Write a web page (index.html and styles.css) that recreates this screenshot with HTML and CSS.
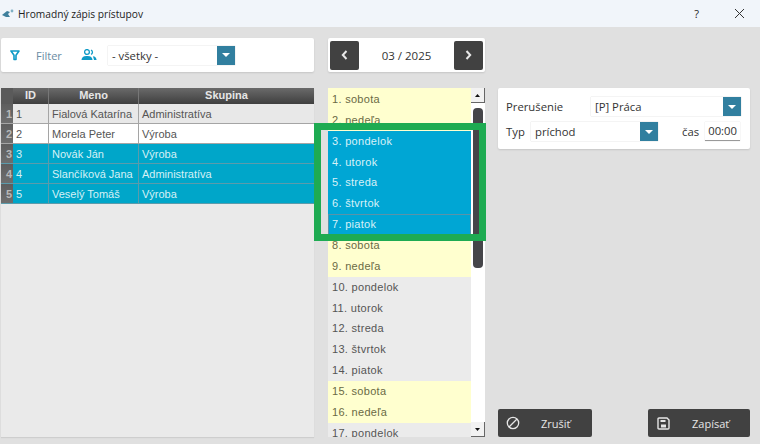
FILE: index.html
```html
<!DOCTYPE html>
<html lang="sk">
<head>
<meta charset="utf-8">
<title>Hromadný zápis prístupov</title>
<link rel="stylesheet" href="styles.css">
</head>
<body>
<div class="window">
  <header class="titlebar">
    <svg class="app-icon" width="12" height="10" viewBox="0 0 12 10"><path d="M0 6 L5 2 L8 3 L6 5 L8 8 L4 8 Z" fill="#3f7f9c"/><circle cx="10" cy="2" r="1.4" fill="#7fb0c4"/></svg>
    <span class="title">Hromadný zápis prístupov</span>
    <span class="help">?</span>
    <svg class="close" width="11" height="11" viewBox="0 0 11 11"><path d="M1 1 L10 10 M10 1 L1 10" stroke="#333" stroke-width="1" fill="none"/></svg>
  </header>
  <main class="content">
    <section class="left">
      <div class="card filter">
        <svg class="funnel" width="10" height="11" viewBox="0 0 10 11"><path d="M1 1 H9 L6 5.2 V9.5 H4 V5.2 Z" fill="none" stroke="#0e9ac6" stroke-width="1.6" stroke-linejoin="round"/></svg>
        <span class="filter-label">Filter</span>
        <svg class="people" width="16" height="12" viewBox="0 0 16 12"><circle cx="6" cy="3" r="2.4" fill="none" stroke="#0e9ac6" stroke-width="1.3"/><path d="M10 1 A2.4 2.4 0 0 1 10 5.4" fill="none" stroke="#0e9ac6" stroke-width="1.3"/><path d="M0.5 11 C1 7.5 3 7 6 7 S11 7.5 11.5 11 Z" fill="#0e9ac6"/><path d="M12 7.2 C14 7.4 15.3 8.6 15.6 11 H13 Z" fill="#0e9ac6"/></svg>
        <div class="select select-group"><span class="select-value">- všetky -</span><span class="arrow"></span></div>
      </div>
      <div class="grid">
        <div class="row head"><span class="rh"></span><span class="c-id">ID</span><span class="c-name">Meno</span><span class="c-group">Skupina</span></div>
        <div class="row odd"><span class="rh">1</span><span class="c-id">1</span><span class="c-name">Fialová Katarína</span><span class="c-group">Administratíva</span></div>
        <div class="row even"><span class="rh">2</span><span class="c-id">2</span><span class="c-name">Morela Peter</span><span class="c-group">Výroba</span></div>
        <div class="row sel"><span class="rh">3</span><span class="c-id">3</span><span class="c-name">Novák Ján</span><span class="c-group">Výroba</span></div>
        <div class="row sel"><span class="rh">4</span><span class="c-id">4</span><span class="c-name">Slančíková Jana</span><span class="c-group">Administratíva</span></div>
        <div class="row sel"><span class="rh">5</span><span class="c-id">5</span><span class="c-name">Veselý Tomáš</span><span class="c-group">Výroba</span></div>
      </div>
    </section>
    <section class="middle">
      <div class="card month">
        <button class="nav"><svg width="7" height="10" viewBox="0 0 7 10"><path d="M5.5 1 L1.8 5 L5.5 9" fill="none" stroke="#e8e8e8" stroke-width="2"/></svg></button>
        <span class="month-label">03 / 2025</span>
        <button class="nav"><svg width="7" height="10" viewBox="0 0 7 10"><path d="M1.5 1 L5.2 5 L1.5 9" fill="none" stroke="#e8e8e8" stroke-width="2"/></svg></button>
      </div>
      <div class="days">
        <div class="day-list">
          <div class="day we">1. sobota</div>
          <div class="day we">2. nedeľa</div>
          <div class="day on">3. pondelok</div>
          <div class="day on">4. utorok</div>
          <div class="day on">5. streda</div>
          <div class="day on">6. štvrtok</div>
          <div class="day on focus">7. piatok</div>
          <div class="day we">8. sobota</div>
          <div class="day we">9. nedeľa</div>
          <div class="day">10. pondelok</div>
          <div class="day">11. utorok</div>
          <div class="day">12. streda</div>
          <div class="day">13. štvrtok</div>
          <div class="day">14. piatok</div>
          <div class="day we">15. sobota</div>
          <div class="day we">16. nedeľa</div>
          <div class="day">17. pondelok</div>
        </div>
        <div class="scrollbar">
          <span class="sb-btn"><svg width="5" height="3" viewBox="0 0 5 3"><path d="M2.5 0 L5 3 H0 Z" fill="#111"/></svg></span>
          <span class="sb-track"><span class="sb-thumb"></span></span>
          <span class="sb-btn"><svg width="5" height="3" viewBox="0 0 5 3"><path d="M0 0 H5 L2.5 3 Z" fill="#111"/></svg></span>
        </div>
      </div>
      <div class="highlight"></div>
    </section>
    <section class="right">
      <div class="card form">
        <div class="form-row">
          <span class="label label-wide">Prerušenie</span>
          <div class="select select-break"><span class="select-value">[P] Práca</span><span class="arrow"></span></div>
        </div>
        <div class="form-row">
          <span class="label label-type">Typ</span>
          <div class="select select-type"><span class="select-value">príchod</span><span class="arrow"></span></div>
          <span class="label label-time">čas</span>
          <span class="time">00:00</span>
        </div>
      </div>
      <div class="actions">
        <button class="btn btn-cancel"><svg width="14" height="14" viewBox="0 0 14 14"><circle cx="7" cy="7" r="5.7" fill="none" stroke="#e6e6e6" stroke-width="1.3"/><path d="M3 11 L11 3" stroke="#e6e6e6" stroke-width="1.3"/></svg><span>Zrušiť</span></button>
        <button class="btn btn-save"><svg width="13" height="13" viewBox="0 0 13 13"><path d="M1 2 Q1 1 2 1 H10 L12 3 V11 Q12 12 11 12 H2 Q1 12 1 11 Z" fill="none" stroke="#e6e6e6" stroke-width="1.4"/><rect x="3.5" y="3" width="5" height="2" fill="#e6e6e6"/><rect x="4" y="7.5" width="5" height="3" fill="#e6e6e6"/></svg><span>Zapísať</span></button>
      </div>
    </section>
  </main>
</div>
</body>
</html>
```
FILE: styles.css
```css
* { box-sizing: border-box; }
html, body { margin: 0; padding: 0; }
body { width: 760px; height: 444px; overflow: hidden; background: #e0e0e0; font-family: "Liberation Sans", Arial, sans-serif; }
.window { width: 760px; height: 444px; display: flex; flex-direction: column; }

.titlebar { height: 27px; flex: none; background: #f1f5fa; display: flex; align-items: center; padding-left: 2px; font-family: "Open Sans", sans-serif; font-size: 10.2px; color: #222; }
.app-icon { margin-right: 4px; }
.title { flex: 1; }
.help { margin-right: 35px; font-size: 11px; }
.close { margin-right: 15px; }

.content { flex: 1; min-height: 0; display: flex; align-items: stretch; padding: 11px 0 7px 1px; }
.card { background: #fff; box-shadow: 0 1px 2px rgba(0,0,0,.12); border-radius: 2px; }

.left { width: 313px; flex: none; display: flex; flex-direction: column; gap: 16px; min-height: 0; }
.filter { height: 34px; flex: none; display: flex; align-items: center; padding-left: 9px; font-family: "Open Sans", sans-serif; }
.funnel { margin-right: 16px; }
.filter-label { font-size: 11px; color: #6a8ca3; width: 45px; }
.people { margin-right: 11px; }

.select { display: flex; align-items: center; background: #fff; height: 19px; box-shadow: 0 0 1px rgba(0,0,0,.25); font-family: "Open Sans", sans-serif; font-size: 11.3px; color: #333; }
.select-value { flex: 1; padding-left: 4px; }
.arrow { width: 18px; height: 19px; background: #317f9f; display: flex; align-items: center; justify-content: center; }
.arrow::after { content: ""; border-left: 4px solid transparent; border-right: 4px solid transparent; border-top: 4px solid #fff; }
.select-group { width: 127px; }

.grid { flex: 1; background: #eaeaea; font-size: 11px; color: #555; box-shadow: 0 1px 1px rgba(0,0,0,.08); }
.row { display: flex; height: 20px; border-bottom: 1px solid #a5a5a5; line-height: 20px; }
.row span { white-space: nowrap; overflow: hidden; }
.rh { width: 12px; flex: none; background: linear-gradient(#5e5e5e, #6e6e6e); color: #b8b8b8; font-weight: bold; text-align: right; padding-right: 1px; }
.c-id { width: 36px; flex: none; padding-left: 3px; border-right: 1px solid #a5a5a5; }
.c-name { width: 90px; flex: none; padding-left: 3px; border-right: 1px solid #a5a5a5; }
.c-group { flex: 1; padding-left: 3px; }
.head { height: 16px; line-height: 15px; border-bottom: 0; background: linear-gradient(#6a6a6a, #3f3f3f); color: #e6e6e6; font-weight: bold; }
.head span { text-align: center; padding: 0; border-color: #777; }
.head .rh { background: #5a5a5a; }
.odd { background: #e8e8e8; }
.even { background: #fff; }
.sel { background: #00a6c9; color: #d6f1f6; border-bottom-color: #5c9bab; }
.sel .c-id, .sel .c-name { border-right-color: #5c9bab; }

.middle { position: relative; width: 157px; flex: none; margin-left: 14px; display: flex; flex-direction: column; gap: 16px; min-height: 0; }
.month { height: 34px; flex: none; display: flex; align-items: center; justify-content: space-between; padding: 0 2px; }
.nav { width: 29px; height: 29px; border: 0; border-radius: 2px; background: #414141; padding: 0; display: flex; align-items: center; justify-content: center; }
.month-label { font-family: "Open Sans", sans-serif; font-size: 11.5px; color: #333; }

.days { flex: 1; display: flex; min-height: 0; overflow: hidden; background: #fff; }
.day-list { width: 143px; overflow: hidden; font-size: 11px; letter-spacing: 0.3px; padding-top: 1px; background: #ffffcf; }
.day { height: 20.86px; line-height: 20px; padding-left: 4px; background: #ebebeb; color: #555; }
.we { background: #ffffcf; color: #6a6a45; }
.on { background: #00a6d4; color: #d8f1f8; }
.focus { box-shadow: inset 0 0 0 1px #5b93a8; }

.scrollbar { width: 14px; display: flex; flex-direction: column; align-items: center; background: #fff; }
.sb-btn { width: 14px; height: 15px; flex: none; background: #f2f2f2; border-right: 1px solid #666; border-bottom: 1px solid #666; display: flex; align-items: center; justify-content: center; }
.sb-track { flex: 1; width: 100%; min-height: 0; padding: 5px 2px 0 2px; }
.sb-thumb { display: block; height: 160px; background: #454549; border-radius: 4px; }

.highlight { position: absolute; left: -14px; top: 85px; width: 172px; height: 118px; border: 7px solid #1eab52; }

.right { flex: 1; margin-left: 13px; padding-right: 10px; display: flex; flex-direction: column; justify-content: space-between; min-height: 0; }
.form { margin-top: 50px; height: 61px; padding: 9px 9px 0 8px; font-family: "Open Sans", sans-serif; font-size: 11.3px; color: #333; display: flex; flex-direction: column; gap: 6px; }
.form-row { display: flex; align-items: center; height: 19px; }
.label-wide { width: 85px; flex: none; }
.select-break { flex: 1; }
.label-type { width: 25px; flex: none; }
.select-type { width: 127px; flex: none; }
.label-time { margin-left: 24px; }
.time { margin-left: 6px; width: 35px; height: 19px; line-height: 18px; text-align: center; border-bottom: 1px solid #999; box-shadow: 0 0 1px rgba(0,0,0,.2); }

.actions { display: flex; justify-content: space-between; }
.btn { height: 28px; border: 0; border-radius: 2px; background: #414141; color: #e6e6e6; font-family: "Open Sans", sans-serif; font-size: 11px; display: flex; align-items: center; padding: 0; }
.btn-cancel { width: 94px; padding-left: 8px; gap: 21px; }
.btn-save { width: 102px; padding-left: 9px; gap: 22px; }
```
